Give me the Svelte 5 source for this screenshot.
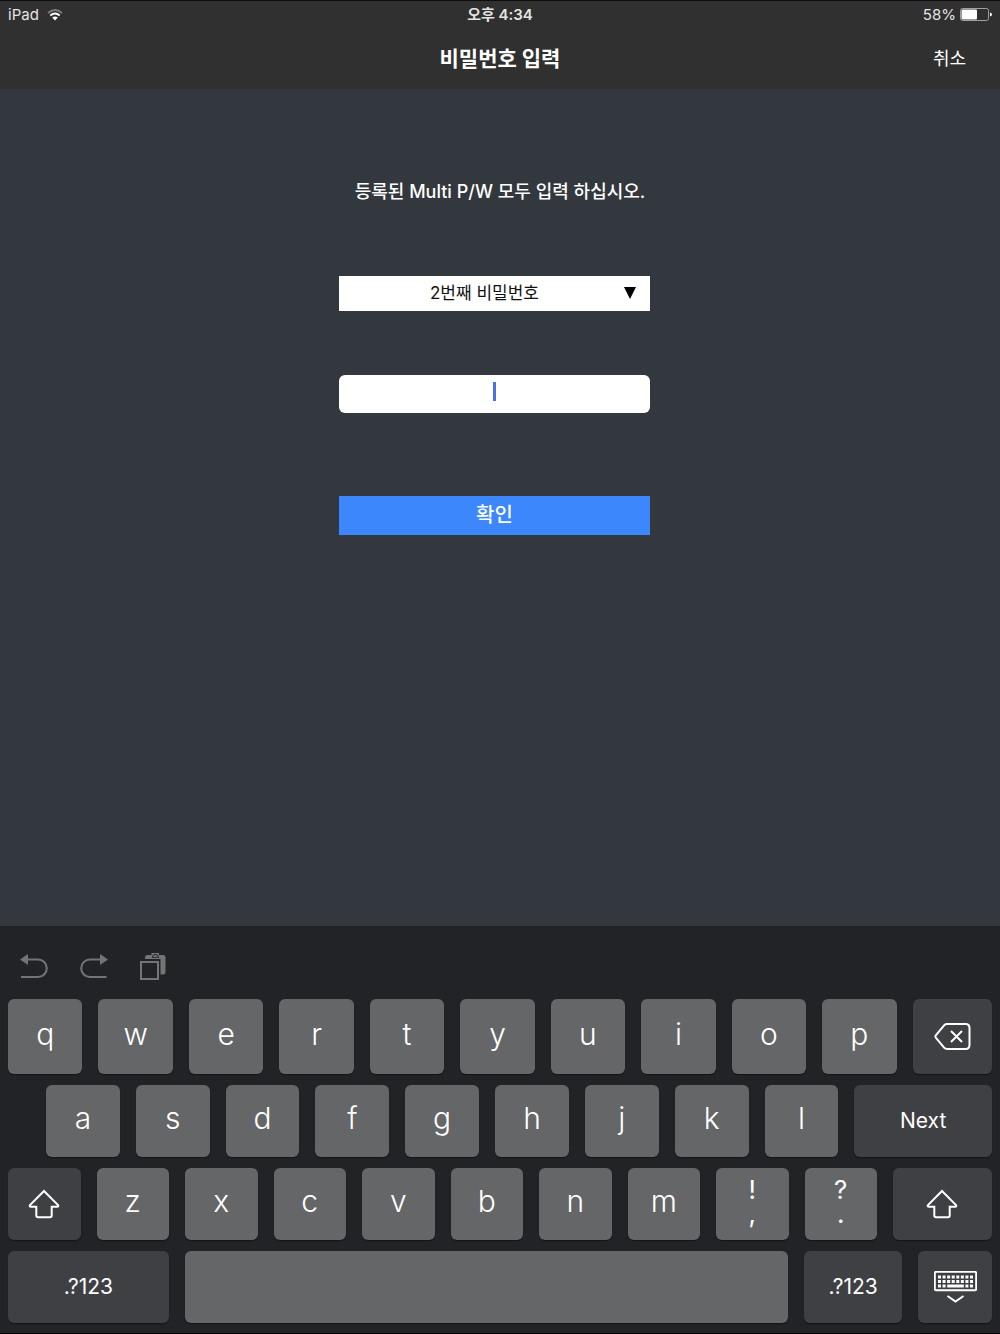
<script lang="ts">
	type Key = { label: string; sub?: string; kind?: string; icon?: string; name?: string };

	const slots = ['1번째 비밀번호', '2번째 비밀번호', '3번째 비밀번호'];

	const letters = (chars: string): Key[] => chars.split('').map((label) => ({ label }));

	const rows: Key[][] = [
		[...letters('qwertyuiop'), { label: '', icon: 'delete', kind: 'dark delete', name: 'Delete' }],
		[...letters('asdfghjkl'), { label: 'Next', kind: 'dark next' }],
		[
			{ label: '', icon: 'shift', kind: 'dark', name: 'Shift' },
			...letters('zxcvbnm'),
			{ label: '!', sub: ',' },
			{ label: '?', sub: '.' },
			{ label: '', icon: 'shift', kind: 'dark shift-right', name: 'Shift' }
		],
		[
			{ label: '.?123', kind: 'dark symbols-left' },
			{ label: '', kind: 'space', name: 'Space' },
			{ label: '.?123', kind: 'dark symbols-right' },
			{ label: '', icon: 'hide', kind: 'dark hide', name: 'Hide keyboard' }
		]
	];

	let selected = $state('2번째 비밀번호');
	let password = $state('');

	function press(key: Key) {
		if (key.icon === 'delete') {
			password = password.slice(0, -1);
		} else if (key.kind === 'space') {
			password += ' ';
		} else if (!key.kind) {
			password += key.sub ?? key.label;
		}
	}
</script>

<div class="screen">
	<header>
		<div class="status">
			<div class="carrier">
				<span>iPad</span>
				<svg width="16" height="12" viewBox="0 0 16 12" aria-hidden="true">
					<path d="M1 4 Q8 -2 15 4" fill="none" stroke="#7c7c7c" stroke-width="1.8" />
					<path d="M3.3 6.5 Q8 2.4 12.7 6.5" fill="none" stroke="#fff" stroke-width="2" />
					<path d="M5.2 8.6 Q8 6.4 10.8 8.6 L8 11.5 Z" fill="#fff" />
				</svg>
			</div>
			<span class="time">오후 4:34</span>
			<div class="battery">
				<span>58%</span>
				<svg width="32" height="13" viewBox="0 0 32 13" aria-hidden="true">
					<rect x="0.5" y="0.5" width="28" height="12" rx="2" fill="none" stroke="#a0a0a0" />
					<rect x="1.5" y="1.5" width="15.5" height="10" rx="1" fill="#fff" />
					<path d="M30 4.5 Q32 5 32 6.5 Q32 8 30 8.5 Z" fill="#fff" />
				</svg>
			</div>
		</div>
		<div class="nav">
			<h1>비밀번호 입력</h1>
			<button class="cancel" type="button">취소</button>
		</div>
	</header>

	<main>
		<p>등록된 Multi P/W 모두 입력 하십시오.</p>

		<form onsubmit={(e) => e.preventDefault()}>
			<div class="field">
				<select aria-label="비밀번호 선택" bind:value={selected}>
					{#each slots as slot}
						<option>{slot}</option>
					{/each}
				</select>
				<svg class="arrow" width="12" height="12" viewBox="0 0 12 12" aria-hidden="true">
					<path d="M0 0 H12 L6 12 Z" />
				</svg>
			</div>
			<div class="field">
				<input type="password" aria-label="비밀번호" bind:value={password} />
				{#if !password}
					<span class="caret"></span>
				{/if}
			</div>
			<button class="confirm" type="submit">확인</button>
		</form>
	</main>

	<section class="keyboard">
		<div class="tools">
			<button type="button" aria-label="Undo">
				<svg width="28" height="26" viewBox="0 0 28 26">
					<path d="M0 5.5 L8 0 V11 Z" fill="#737476" />
					<path d="M6 5.5 H18 A8.8 8.8 0 0 1 18 23.1 H1" fill="none" stroke="#737476" stroke-width="2" />
				</svg>
			</button>
			<button type="button" aria-label="Redo">
				<svg width="28" height="26" viewBox="0 0 28 26">
					<path d="M28 5.5 L20 0 V11 Z" fill="#737476" />
					<path d="M22 5.5 H10 A8.8 8.8 0 0 0 10 23.1 H26.5" fill="none" stroke="#737476" stroke-width="2" />
				</svg>
			</button>
			<button type="button" aria-label="Paste">
				<svg width="26" height="27" viewBox="0 0 26 27">
					<path d="M5 6 V4.5 Q5 2 7.5 2 H11.5 V0 H19 V2 H23 Q25.5 2 25.5 4.5 V19 Q25.5 21.5 23 21.5 H20.5 V6 Z" fill="#737476" />
					<path d="M12.5 4.5 V2.8 H14 V1.5 H17 V2.8 H18.5 V4.5 Z" fill="none" stroke="#212326" stroke-width="0.8" />
					<rect x="1" y="9" width="17" height="17" fill="#212326" stroke="#737476" stroke-width="2" />
				</svg>
			</button>
		</div>

		{#each rows as row, i}
			<div class="row row-{i + 1}">
				{#each row as key}
					<button
						type="button"
						class="key {key.kind ?? ''}"
						class:double={key.sub}
						aria-label={key.name}
						onclick={() => press(key)}
					>
						{#if key.icon === 'delete'}
							<svg width="37" height="27" viewBox="0 0 37 27">
								<path
									d="M13 1 H31.5 Q35.5 1 35.5 5 V22 Q35.5 26 31.5 26 H13 Q11.500 26 10.300 24.800 L1.800 14.600 Q1 13.500 1.800 12.400 L10.300 2.200 Q11.500 1 13 1 Z"
								/>
								<path d="M17 8 L28 19 M28 8 L17 19" />
							</svg>
						{:else if key.icon === 'shift'}
							<svg width="32" height="30" viewBox="0 0 32 30">
								<path
									d="M16 2 L30 16 Q31 17.8 29 17.8 H23.7 V26.5 Q23.7 28.3 21.9 28.3 H10.1 Q8.3 28.3 8.3 26.5 V17.8 H3 Q1 17.8 2 16 Z"
								/>
							</svg>
						{:else if key.icon === 'hide'}
							<svg width="43" height="32" viewBox="0 0 43 32">
								<rect x="0.8" y="0.8" width="41.4" height="18.4" rx="1.5" />
								<path d="M4 6 H39" stroke-width="3" stroke-dasharray="3 1.57" />
								<path d="M4 10.5 H39" stroke-width="3" stroke-dasharray="3 1.57" />
								<path d="M4 15 H11.6" stroke-width="3" stroke-dasharray="3 1.57" />
								<path d="M13.2 15 H29.8" stroke-width="3" />
								<path d="M31.4 15 H39" stroke-width="3" stroke-dasharray="3 1.57" />
								<path d="M13.5 25 L21.5 30.5 L29.5 25" />
							</svg>
						{:else}
							<span>{key.label}</span>
							{#if key.sub}
								<span>{key.sub}</span>
							{/if}
						{/if}
					</button>
				{/each}
			</div>
		{/each}
	</section>
</div>

<style>
	:global(body) {
		margin: 0;
		background: #33373e;
	}

	.screen {
		display: flex;
		flex-direction: column;
		min-height: 100vh;
		box-sizing: border-box;
		border-top: 1px solid #0c0c0c;
		border-bottom: 1px solid #000;
		background: #33373e;
		color: #fff;
		font-family: Inter, 'Noto Sans CJK KR', sans-serif;
	}

	button,
	select,
	input {
		margin: 0;
		padding: 0;
		border: 0;
		border-radius: 0;
		color: inherit;
		font: inherit;
	}

	button {
		background: none;
	}

	svg {
		display: block;
	}

	header {
		background: #303030;
	}

	.status,
	.nav {
		display: grid;
		grid-template-columns: 1fr auto 1fr;
		align-items: center;
	}

	.status {
		height: 27px;
		padding: 0 8px;
		font-size: 15px;
		line-height: 24px;
		color: #e4e4e4;
	}

	.carrier,
	.battery {
		display: flex;
		align-items: center;
		gap: 8px;
	}

	.battery {
		justify-content: flex-end;
		gap: 4px;
	}

	.time {
		font-weight: 600;
	}

	.nav {
		height: 61px;
		padding: 0 34px;
	}

	h1 {
		grid-column: 2;
		margin: 0;
		font-size: 21px;
		font-weight: 700;
		line-height: 30px;
	}

	.cancel {
		justify-self: end;
		font-size: 18px;
		line-height: 28px;
	}

	main {
		flex: 1;
		padding: 89px 20px 40px;
	}

	p {
		margin: 0 0 71px;
		font-size: 18px;
		font-weight: 500;
		line-height: 27px;
		text-align: center;
	}

	form {
		max-width: 311px;
		margin: 0 auto;
		padding-right: 11px;
	}

	.field {
		position: relative;
		margin-bottom: 64px;
	}

	.field + .field {
		margin-bottom: 83px;
	}

	select {
		display: block;
		width: 100%;
		height: 35px;
		padding: 0 20px 2px 0;
		appearance: none;
		background: #fff;
		color: #111;
		font-size: 17px;
		text-align: center;
		text-align-last: center;
	}

	.arrow {
		position: absolute;
		top: 11px;
		right: 14px;
		pointer-events: none;
	}

	input {
		display: block;
		box-sizing: border-box;
		width: 100%;
		height: 38px;
		border-radius: 6px;
		background: #fff;
		color: #111;
		font-size: 17px;
		text-align: center;
	}

	.caret {
		position: absolute;
		top: 7px;
		left: 50%;
		width: 3px;
		height: 19px;
		margin-left: -2px;
		background: #4a72ee;
		pointer-events: none;
	}

	.confirm {
		width: 100%;
		height: 39px;
		background: #3b87fb;
		font-size: 20px;
		font-weight: 500;
		line-height: 37px;
	}

	.keyboard {
		display: flex;
		flex-direction: column;
		gap: 11px;
		padding: 0 8px 10px;
		background: #212326;
	}

	.tools {
		display: flex;
		align-items: flex-end;
		gap: 32px;
		height: 54px;
		padding: 0 12px 8px;
	}

	.row {
		display: flex;
		gap: 16px;
		height: 72px;
	}

	.row-1 {
		height: 75px;
	}

	.row-2 {
		padding-left: 38px;
	}

	.key {
		display: flex;
		flex: 74 1 0;
		align-items: center;
		justify-content: center;
		min-width: 0;
		padding-bottom: 6px;
		border-radius: 6px;
		background: #656668;
		box-shadow: 0 1px 1px #141517;
		font-size: 30px;
		font-weight: 300;
		line-height: 36px;
	}

	.dark {
		padding-bottom: 0;
		background: #3f4043;
		font-size: 21px;
		font-weight: 400;
	}

	.double {
		flex-direction: column;
		padding-bottom: 4px;
		font-size: 26px;
		font-weight: 400;
		line-height: 24px;
	}

	.delete {
		flex-grow: 79;
	}

	.next {
		flex-grow: 138;
	}

	.shift-right {
		flex-grow: 101;
	}

	.symbols-left {
		flex-grow: 161;
	}

	.space {
		flex-grow: 604;
	}

	.symbols-right {
		flex-grow: 98;
	}

	.key svg {
		fill: none;
		stroke: #fff;
		stroke-width: 2;
	}
</style>
